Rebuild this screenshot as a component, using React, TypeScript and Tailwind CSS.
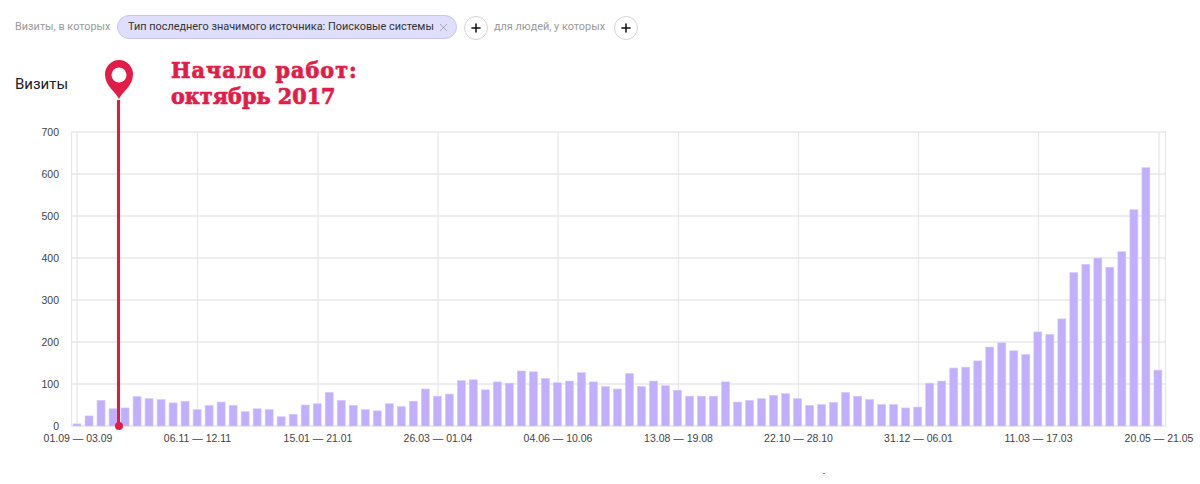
import { Plus, X } from "lucide-react";

const VISITS = [
  5, 24, 61, 41, 43, 70, 65, 63, 55, 59,
  39, 49, 57, 49, 34, 41, 39, 22, 28, 50,
  53, 80, 61, 49, 39, 36, 53, 46, 59, 88,
  71, 76, 108, 110, 86, 105, 102, 131, 129, 113,
  103, 107, 127, 105, 94, 88, 125, 94, 107, 96,
  85, 71, 71, 71, 105, 57, 61, 65, 73, 77,
  65, 49, 51, 56, 80, 71, 63, 51, 51, 43,
  45, 102, 107, 138, 140, 155, 188, 198, 179, 170,
  224, 218, 255, 365, 385, 400, 378, 415, 515, 615,
  133,
];

const TICKS = [
  { x: 77, label: "01.09 — 03.09", lx: 78 },
  { x: 197.5, label: "06.11 — 12.11" },
  { x: 318, label: "15.01 — 21.01" },
  { x: 438, label: "26.03 — 01.04" },
  { x: 558, label: "04.06 — 10.06" },
  { x: 678.5, label: "13.08 — 19.08" },
  { x: 798.5, label: "22.10 — 28.10" },
  { x: 918.5, label: "31.12 — 06.01" },
  { x: 1038.5, label: "11.03 — 17.03" },
  { x: 1159, label: "20.05 — 21.05", lx: 1159 },
];

const LEVELS = [0, 100, 200, 300, 400, 500, 600, 700];

// svg is 125px below page top, zero line sits at y=426 on the page
const ZERO = 301;
const PX_PER_VISIT = 0.42;
const GRID = "#e8e8e8";

function AddButton() {
  return (
    <button type="button" className="w-[24px] h-[24px] mt-[1px] rounded-full bg-white border border-[#d4d4d4] flex items-center justify-center">
      <Plus size={14} strokeWidth={2.6} className="text-[#111111]" />
    </button>
  );
}

function VisitsChart() {
  return (
    <svg width={1200} height={330} className="block" style={{ fontFamily: '"Liberation Sans", Arial, sans-serif' }}>
      {LEVELS.map((v) => (
        <line key={v} x1={71} x2={1166} y1={ZERO - v * PX_PER_VISIT} y2={ZERO - v * PX_PER_VISIT} stroke={GRID} strokeWidth={1.3} />
      ))}
      <line x1={71.5} x2={71.5} y1={7} y2={ZERO} stroke={GRID} strokeWidth={1.3} />
      <line x1={1165.5} x2={1165.5} y1={7} y2={ZERO} stroke={GRID} strokeWidth={1.3} />
      {TICKS.map((t) => (
        <line key={t.x} x1={t.x} x2={t.x} y1={7} y2={ZERO} stroke={GRID} strokeWidth={1.3} />
      ))}
      {VISITS.map((v, i) => (
        <rect
          key={i}
          x={73 + i * 12.01}
          y={ZERO - v * PX_PER_VISIT}
          width={8}
          height={v * PX_PER_VISIT}
          fill="#c1affb"
          stroke="#d5c9fd"
          strokeWidth={0.6}
        />
      ))}
      {LEVELS.map((v) => (
        <text key={v} x={59} y={ZERO - v * PX_PER_VISIT + 4} textAnchor="end" fontSize={10.5} fill="#444444">
          {v}
        </text>
      ))}
      {TICKS.map((t) => (
        <text key={t.label} x={t.lx ?? t.x} y={317} textAnchor="middle" fontSize={10.5} fill="#444444">
          {t.label}
        </text>
      ))}
    </svg>
  );
}

export default function App() {
  return (
    <div className="relative w-[1200px] h-[484px] bg-white overflow-hidden font-['Roboto',sans-serif]">
      {/* Filters */}
      <div className="flex items-center h-[24px] mt-[15px] pl-[15px]">
        <span className="text-[10.9px] text-[#9a9a9a] w-[102px] whitespace-nowrap">Визиты, в которых</span>
        <div className="flex items-center h-[24px] w-[340px] pl-[10px] rounded-[12px] bg-[#dfdffb] border border-[#c7c7f2]">
          <span className="text-[10.9px] text-[#333333] whitespace-nowrap">Тип последнего значимого источника: Поисковые системы</span>
          <X size={13} strokeWidth={1} className="text-[#77778f] ml-[3px]" />
        </div>
        <div className="ml-[7px]"><AddButton /></div>
        <span className="text-[10.9px] text-[#9a9a9a] ml-[6px] w-[120px] whitespace-nowrap">для людей, у которых</span>
        <AddButton />
      </div>

      <h2 className="mt-[35px] pl-[15px] h-[20px] leading-[20px] text-[15px] text-[#222222]">Визиты</h2>

      <div className="mt-[31px]">
        <VisitsChart />
      </div>

      {/* Campaign start marker */}
      <div className="absolute left-[105px] top-[60px] w-[28px] h-[370px]">
        <svg width={28} height={39} viewBox="0 0 28 39" className="absolute left-0 top-0">
          <path d="M14 39 C11 32 0 26 0 14.5 A14 14.5 0 0 1 28 14.5 C28 26 17 32 14 39 Z" fill="#e31c47" />
          <circle cx={14} cy={15} r={7.5} fill="#ffffff" />
        </svg>
        <div className="absolute left-[11.5px] top-[40px] bottom-[4px] w-[3px] bg-[#e8173f]" />
        <div className="absolute left-[9.5px] bottom-0 w-[8px] h-[8px] rounded-full bg-[#e31c47]" />
      </div>
      <div className="absolute left-[171px] top-[57px] text-[23px] leading-[25.5px] font-bold text-[#e31c47] font-['DejaVu_Serif_Condensed','DejaVu_Serif',serif] [-webkit-text-stroke:0.7px_#e31c47]">
        <div className="tracking-[1.05px]">Начало работ:</div>
        <div className="tracking-[0.05px]">октябрь 2017</div>
      </div>

      {/* stray speck in the screenshot */}
      <div className="absolute left-[823px] top-[473px] w-[2px] h-[1px] bg-[#8a8a8a]" />
    </div>
  );
}
